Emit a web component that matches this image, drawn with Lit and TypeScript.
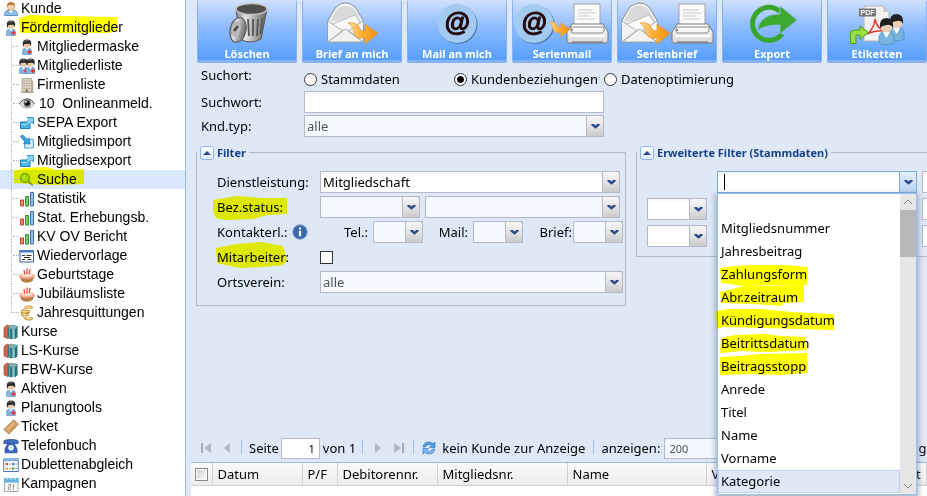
import { LitElement, html, svg, css, nothing, TemplateResult } from "lit";
import { customElement, property } from "lit/decorators.js";
import { classMap } from "lit/directives/class-map.js";

const nurse = (dx: number) => svg`<g transform="translate(${dx} 0)">
  <path d="M3.5 15.5V12q0-2.5 2.5-2.8h4q2.5.3 2.500 2.800v3.500z" fill="#7fb6e6" stroke="#5b8fbd" stroke-width=".6"/>
  <path d="M6.500 9l1.500 2.500L9.500 9z" fill="#fff"/>
  <circle cx="8" cy="5.500" r="3.300" fill="#e9c9a8"/>
  <path d="M3.800 5.500Q3.300.5 8 .5t4.200 4.500l-.3 2Q11 4.300 8.500 4.800 6 5.200 5.300 5 5 7.500 4.500 8z" fill="#2c2c2e"/>
  <path d="M5.500 2.200Q7 1.200 9.500 1.900" stroke="#888" stroke-width=".8" fill="none"/>
  <path d="M8.200 12.200h1.500v-1.500h1.400v1.500h1.400v1.500h-1.400v1.400H9.700v-1.400H8.200z" fill="#f02a2a"/></g>`;

const exportBox = svg`<path d="M1.500 7h9.500v6.500H1.500z" fill="#4fb4e6" stroke="#1b7fc0"/>
  <path d="M2.500 9.500h7" stroke="#a5def7"/>
  <path d="M8 2.500h6.500V9l-2-2-3 3L7 7.500l3-3z" fill="#8ad4f5" stroke="#1b86c6" stroke-width=".8"/>`;

const icons: Record<string, TemplateResult> = {
  user: svg`<path d="M1.500 14.500q0-5 4-5.500h5q4 .5 4 5.500z" fill="#8fc0ee" stroke="#4d7fb5" stroke-width=".8"/>
    <path d="M6 9l2 3.500L10 9z" fill="#fff"/><circle cx="8" cy="5.500" r="3.700" fill="#f6d3a5" stroke="#b98650" stroke-width=".6"/>
    <path d="M4 5.500Q3.800 1 8 1t4 4.500Q10.500 3.500 8 3.700T4 5.500z" fill="#bd7c3a"/>`,
  nurse: nurse(0),
  nurses: svg`${nurse(-3.5)}${nurse(3.5)}`,
  building: svg`<path d="M3 1.500h9.500V15H3z" fill="#ddd3c3" stroke="#a89a86" stroke-width=".8"/>
    <path d="M12.500 3l1.800 1v11h-1.800z" fill="#b8a994"/>
    <path d="M4.500 4h7M4.500 6.500h7M4.500 9h7M4.500 11.500h7" stroke="#a3967f" stroke-width="1.200" stroke-dasharray="1.400 1.200"/>
    <path d="M6.500 12.500h2.500V15H6.500z" fill="#80725f"/><path d="M1.500 15.300h13.500" stroke="#958a7a" stroke-width=".8"/>`,
  eye: svg`<path d="M.5 8Q4 2.500 8.500 2.800 13 3.200 15.500 8 12 12.500 8 12.300 3.500 12 .5 8z" fill="#e6e6e6" stroke="#999" stroke-width=".8"/>
    <path d="M.5 7.500Q4 2.500 8.500 2.800 13 3.200 15.500 8" stroke="#555" fill="none"/>
    <circle cx="8.300" cy="7.300" r="3.700" fill="#6d6d6d"/><circle cx="8.300" cy="7.300" r="2.400" fill="#111"/><circle cx="7" cy="6" r=".9" fill="#fff"/>`,
  export: exportBox,
  import: svg`<path d="M5.500 8.500V14h8.800V5.500H11" fill="#d9effb" stroke="#4aa5d8"/>
    <path d="M1.500 2.500l2-1.500 5 4.500 1.500-1.700 1 6.200-6.500-.5L6 8z" fill="#37a4e0" stroke="#1a74b3" stroke-width=".8"/>`,
  search: svg`<circle cx="6" cy="6" r="4.300" fill="#a5dc50" stroke="#5a9a1c" stroke-width="1.200"/>
    <path d="M3.800 5.500Q4.300 3.700 6.200 3.600" stroke="#eaffc5" fill="none"/><path d="M9.500 9.500l3.800 3.500" stroke="#8d9870" stroke-width="2" stroke-linecap="round"/>`,
  bars: svg`<path d="M1.500 9h3v6h-3z" fill="#ee8a72" stroke="#c33f28"/><path d="M6.500 5.500h3V15h-3z" fill="#77cf70" stroke="#2f9133"/>
    <path d="M11.500 1.500h3V15h-3z" fill="#94bdea" stroke="#3f70b6"/>`,
  form: svg`<path d="M1 2.500h13.500v11.500H1z" fill="#fff" stroke="#3b5f9e"/><path d="M.5 2h14.500v2.500H.5z" fill="#4a79c8"/>
    <path d="M3 7.500h3M7.500 7.500h5M5 9.500h6M3 11.500h3M8.500 11.500h4" stroke="#333"/>`,
  cake: svg`<path d="M1 8.500Q1 7 8 7t7 1.500v2Q15 12 8 12T1 10.500z" fill="#f7ab8e" stroke="#cc6d4c" stroke-width=".7"/>
    <ellipse cx="8" cy="8.300" rx="6.300" ry="1.600" fill="#fbe0ce"/>
    <path d="M2.500 11.500v2q1.500 1.700 5.500 1.700t5.500-1.700v-2Q12 12.700 8 12.700t-5.500-1.200z" fill="#bb813b" stroke="#8e5b21" stroke-width=".6"/>
    <path d="M5 3l.7 4.500M8 1.500V7M11 2l-.7 5" stroke="#e64a30" stroke-width="1.300"/>`,
  euro: svg`<path d="M13.500 3.300Q12 1.800 9.800 1.800 5 2 5 8t4.800 6.200q2.200 0 3.700-1.500M2 6.500h9M2 9.500h8" fill="none" stroke="#b98a3b" stroke-width="2.800"/>
    <path d="M13.200 3.300Q12 2 9.800 2 5 2.200 5 8t4.800 6q2.200 0 3.400-1.300M2.500 6.500h8M2.500 9.500h7" fill="none" stroke="#f4d388" stroke-width="1.500"/>`,
  books: svg`<path d="M1 3.500l3-2.500 3 1-2 2v10.500L1 13z" fill="#d0664b" stroke="#953b26" stroke-width=".6"/>
    <path d="M5 4l3-3 6.500 1.300L12 5z" fill="#7db5b8" stroke="#42757a" stroke-width=".5"/><path d="M5 4l4 1v10.500l-4-1.300z" fill="#2f7683"/>
    <path d="M9 5h3v10H9z" fill="#69b0b2"/><path d="M12 5l2.500-2.700v11L12 15.300z" fill="#2c6f79"/><path d="M6.500 5v9M10.500 5.500V15" stroke="#a3d5d5" stroke-width=".6"/>`,
  ticket: svg`<path d="M.7 10.500L10.500 1l2 1.200q-.2 1.500 1.300 1.600l1.700 1.400L6 15l-1.700-1.300q.2-1.600-1.500-1.700z" fill="#d9a769" stroke="#9d6e37" stroke-width=".8"/>
    <path d="M4.500 10.500L11 4.300" stroke="#f2d3a6"/><path d="M6.500 12.300L13 6" stroke="#b98446" stroke-width=".7"/>`,
  phone: svg`<path d="M.8 5.500V3.300Q1 1.500 8 1.500t7.200 1.800v2.200h-4V4.200H4.800v1.300z" fill="#3d72cf" stroke="#1c438f" stroke-width=".7"/>
    <path d="M5 5h6l3 6v3.800H2V11z" fill="#3166c4" stroke="#1c438f" stroke-width=".7"/><circle cx="8" cy="9.800" r="2.800" fill="#f1f6ff"/><circle cx="8" cy="9.800" r="1" fill="#c1d3f0"/>`,
  list: svg`<path d="M.7 2h14.600v12.500H.7z" fill="#fff" stroke="#4a77b8"/><path d="M.5 1.500h15v2.800H.5z" fill="#82aee5"/>
    <path d="M2.500 6h2.500v2.200H2.500z" fill="#e44a3b"/><path d="M2.500 10.500h2.500v2.200H2.500z" fill="#e8a935"/><path d="M9 6h2.500v2.200H9z" fill="#3f78d0"/><path d="M9 10.500h2.500v2.200H9z" fill="#4aa84a"/>
    <path d="M6 7h2M6 11.500h2M12.300 7h1.700M12.300 11.500h1.700" stroke="#999"/>`,
  calendar: svg`<path d="M1.500 2.500h13.500v13H1.500z" fill="#fafafa" stroke="#aaa"/><path d="M1 2h14.500v4.500H1z" fill="#5fb3de"/>
    <path d="M4.500.5v3M8.200.5v3M12 .5v3" stroke="#dceef8" stroke-width="1.500"/>
    <path d="M5 8.700h2.500v2.300H5.300v2.300h2.500M10.500 8.200v5.300" fill="none" stroke="#888" stroke-width=".9"/>`,
  info: svg`<circle cx="8" cy="8" r="7.300" fill="#3c68a8" stroke="#8fa8cd"/><path d="M8 3.500v2M8 6.800v5.400" stroke="#fff" stroke-width="2.200"/>`,
  refresh: svg`<path d="M2 7Q3 2 8 2q2.500 0 4 1.800L14 2v5.500H8.500l2-2Q9.500 4.500 8 4.500 5 4.700 4.500 7z" fill="#4d9be0" stroke="#2a6cb5" stroke-width=".6"/>
    <path d="M14 9Q13 14 8 14q-2.500 0-4-1.800L2 14V8.500h5.500l-2 2Q6.500 11.500 8 11.500q3-.2 3.500-2.500z" fill="#7db9ee" stroke="#2a6cb5" stroke-width=".6"/>`,
  first: svg`<path d="M4 3v10" stroke="#a3a9b3" stroke-width="2"/><path d="M13 3v10L6 8z" fill="#b4b9c1"/>`,
  prev: svg`<path d="M11 3v10L5 8z" fill="#b4b9c1"/>`,
  next: svg`<path d="M5 3v10l6-5z" fill="#b4b9c1"/>`,
  last: svg`<path d="M12 3v10" stroke="#a3a9b3" stroke-width="2"/><path d="M3 3v10l7-5z" fill="#b4b9c1"/>`,
  blank: svg`<circle cx="5" cy="5.500" r="4" fill="#8fc4ea" stroke="#3f86bd"/>`,
};
const icon = (name: string) => html`<svg class="icon" viewBox="0 0 16 16" aria-hidden="true">${icons[name]}</svg>`;

const gradients = svg`<defs>
  <linearGradient id="steel"><stop offset="0" stop-color="#777"/><stop offset=".3" stop-color="#e6e6e6"/><stop offset=".6" stop-color="#aaa"/><stop offset="1" stop-color="#666"/></linearGradient>
  <linearGradient id="orange"><stop offset="0" stop-color="#fde0a8"/><stop offset=".4" stop-color="#ffb23c"/><stop offset="1" stop-color="#f58f0c"/></linearGradient>
  <linearGradient id="paper" x2="0" y2="1"><stop offset="0" stop-color="#fff"/><stop offset="1" stop-color="#d5d7d6"/></linearGradient>
</defs>`;
const envelope = (x: number) => svg`<g transform="translate(${x} 0)">
  <path d="M1 20L9 7Q19-1 28 7l8 13v22H1z" fill="url(#paper)" stroke="#858c90"/>
  <path d="M3 21L10 8.500q9-6 17 0L34 21z" fill="#d8dada"/>
  <path d="M6 24l22-9 5 7-10 11H9z" fill="#fafafa" stroke="#aaa" stroke-width=".7"/>
  <path d="M1 21l15 10L1 42M36 21L21 31l15 11M1 42l15-12q3-1 5 0l15 12z" fill="#f1f2f1" stroke="#a1a5a6" stroke-width=".8"/></g>`;
const arrow = (x: number, s: number) => svg`<path transform="translate(${x} 20) scale(${s})" d="M0 3Q9 1 12 9q2 3 5 1.500V4l13 9.500L17 24v-6Q6 20 5 9 4 5 0 3z" fill="url(#orange)" stroke="#df9328" stroke-width=".7"/>`;
const atDisc = (x: number) => svg`<circle cx="${x + 1}" cy="24.500" r="19.500" fill="#4b79a8"/><circle cx="${x}" cy="23.500" r="19.500" fill="#a3cbf1"/>
  <text class="at" x="${x}" y="31" text-anchor="middle">@</text>`;
const printer = svg`<path d="M62 4h26v24H62z" fill="#fafafa" stroke="#a3a3a3"/><path d="M66 10h15M66 13h18M66 16h12M66 19h17" stroke="#c9c9c9"/>
  <path d="M60 24h31l5 8v9q0 2-2 2H57q-2 0-2-2v-9z" fill="url(#paper)" stroke="#75797c"/><path d="M59 27h33v4q-1 2-3 2H61q-2 0-2-2z" fill="#f8f8f8" stroke="#8c8c8c"/>
  <path d="M58 36h35" stroke="#fff" stroke-width="2"/><path d="M60 42h31" stroke="#666"/><circle cx="60" cy="30" r="1" fill="#777"/>`;
const person = (x: number, y: number) => svg`<g transform="translate(${x} ${y})"><path d="M1 27v-6q1-5 5-5h5q4 0 5 5v6q-7 4-15 0z" fill="#78b4de" stroke="#4b86b3" stroke-width=".7"/>
  <path d="M5 16l3.500 6L12 16z" fill="#fff"/><circle cx="8.500" cy="10.500" r="6" fill="#ecd0b5"/><path d="M2 12Q1 2 8.500 2T15 12q-2-4-6-3-5 .5-7 3z" fill="#1d1f22"/></g>`;

const bigIcons: Record<string, TemplateResult> = {
  trash: svg`<path d="M39 9l4 30q10 6 21 0l6-30z" fill="url(#steel)" stroke="#555"/><ellipse cx="54.500" cy="9" rx="15.500" ry="5.500" fill="#4e4e4e" stroke="#c9c9c9" stroke-width="1.500"/>
    <path d="M51 19l1 17M56 19v17M61 19l-1 17M65.500 18l-2 16" stroke="#555" stroke-width="1.800"/>
    <ellipse cx="41" cy="30" rx="8" ry="12.500" transform="rotate(12 41 30)" fill="url(#steel)" stroke="#555"/><ellipse cx="39" cy="29" rx="4.500" ry="8" transform="rotate(12 39 29)" fill="#b9b9b9"/>
    <path d="M37 31l4-5" stroke="#444" stroke-width="2.500"/>`,
  letter: svg`${envelope(25)}${arrow(46, 1)}`,
  at: atDisc(50),
  mailing: svg`${atDisc(22)}${printer}${arrow(37, 0.7)}`,
  letters: svg`${printer}${envelope(4)}${arrow(23, 1)}`,
  export: svg`<path d="M58 11.500A16.500 16.500 0 1 0 60 34" fill="none" stroke="#37a62a" stroke-width="5"/>
    <path d="M35 31Q38 14 58 14V6l17 14-17 14v-9q-14-1-23 6z" fill="#3daa2f" stroke="#7fb8e8" stroke-width=".8"/>`,
  labels: svg`<path d="M37 6h19l6 6v29H37z" fill="#f1f1f1" stroke="#b5b5b5"/><path d="M56 6v6h6z" fill="#ccc"/>
    <path d="M40 34q7-5 8-15 2 11 12 12-11-1-20 3z" fill="none" stroke="#df3b30" stroke-width="1.500"/>
    <path d="M32 8.500h17v8H32z" fill="#777"/><text class="pdf" x="40.500" y="15" text-anchor="middle">PDF</text>
    ${person(61, 12)}${person(51, 16)}
    <path d="M23.500 43.500V34q0-4 4-4H33v-4l8.500 6.500L33 39v-4h-4v8.500z" fill="#9bdf3e" stroke="#4c9d12"/>`,
};

const chevron = html`<svg viewBox="0 0 10 6" class="chevron" aria-hidden="true"><path d="M0 0h3l2 1.700L7 0h3v1.500L5 5.800 0 1.500z" fill="#2b4c8a"/></svg>`;

interface Marker { w: number; points: string }
const markers: Record<string, Marker> = {
  foerder: { w: 190, points: "19,0 30,-3 60,-2 117,-1 118,13 108,15 60,15 20,15" },
  suche: { w: 190, points: "14,1 24,-2 46,-3 56,0 84,-1 84,14 50,15 30,14 14,13" },
  bez: { w: 90, points: "-4,4 20,0 44,2 70,2 70,18 50,19 36,23 8,24 -1,22 -4,16" },
  mitarbeiter: { w: 90, points: "-1,2 20,-2 44,-4 66,0 70,14 66,19 46,21 22,22 0,17" },
  zahlung: { w: 120, points: "-1,5 14,3 32,2 64,2 87,4 86,22 50,22 24,23 0,20" },
  abr: { w: 120, points: "-1,6 12,3 22,0 83,-1 83,16 62,17 61,20 46,19 30,18 0,17" },
  kuend: { w: 120, points: "-5,2 8,0 40,0 70,3 113,5 113,21 80,20 40,19 2,18 -4,20" },
  beitritt: { w: 120, points: "0,6 14,3 44,2 60,4 84,5 86,18 46,20 20,19 -1,21" },
  stopp: { w: 120, points: "-1,2 20,1 38,-1 86,-2 86,18 60,20 30,19 -1,20" },
};
const mark = (key?: string) =>
  key ? html`<svg class="mark" width=${markers[key].w} height="24" aria-hidden="true"><polygon points=${markers[key].points} fill="#ff0"/></svg>` : nothing;

interface Node { t: string; i: string; sub?: boolean; last?: boolean; on?: boolean; m?: string }
const tree: Node[] = [
  { t: "Kunde", i: "user" },
  { t: "Fördermitglieder", i: "nurse", m: "foerder" },
  { t: "Mitgliedermaske", i: "nurse", sub: true },
  { t: "Mitgliederliste", i: "nurses", sub: true },
  { t: "Firmenliste", i: "building", sub: true },
  { t: "10  Onlineanmeld.", i: "eye", sub: true },
  { t: "SEPA Export", i: "export", sub: true },
  { t: "Mitgliedsimport", i: "import", sub: true },
  { t: "Mitgliedsexport", i: "export", sub: true },
  { t: "Suche", i: "search", sub: true, on: true, m: "suche" },
  { t: "Statistik", i: "bars", sub: true },
  { t: "Stat. Erhebungsb.", i: "bars", sub: true },
  { t: "KV OV Bericht", i: "bars", sub: true },
  { t: "Wiedervorlage", i: "form", sub: true },
  { t: "Geburtstage", i: "cake", sub: true },
  { t: "Jubiläumsliste", i: "cake", sub: true },
  { t: "Jahresquittungen", i: "euro", sub: true, last: true },
  { t: "Kurse", i: "books" },
  { t: "LS-Kurse", i: "books" },
  { t: "FBW-Kurse", i: "books" },
  { t: "Aktiven", i: "nurse" },
  { t: "Planungtools", i: "nurse" },
  { t: "Ticket", i: "ticket" },
  { t: "Telefonbuch", i: "phone" },
  { t: "Dublettenabgleich", i: "list" },
  { t: "Kampagnen", i: "calendar" },
  { t: "", i: "blank" },
];

const base = css`
  * { box-sizing: border-box; }
  .icon { width: 16px; height: 16px; flex: none; display: block; }
  .mark { position: absolute; left: 0; top: 0; overflow: visible; mix-blend-mode: multiply; pointer-events: none; }
`;

@customElement("nav-tree")
export class NavTree extends LitElement {
  static styles = [base, css`
    :host { display: block; font: 14px/19px "Liberation Sans", Arial, sans-serif; color: #000; }
    ul { list-style: none; margin: -1px 0 0; padding: 0; }
    li { position: relative; height: 19px; }
    a { display: flex; align-items: center; gap: 2px; height: 19px; padding-left: 3px; color: inherit; text-decoration: none; white-space: pre; }
    .sub a { padding-left: 19px; }
    .count { padding-left: 2px; }
    .sub::before { content: ""; position: absolute; left: 11px; top: 0; bottom: 0; border-left: 1px dotted #b4b4b4; }
    .sub::after { content: ""; position: absolute; left: 13px; top: 9px; width: 6px; border-top: 1px dotted #b4b4b4; }
    .last::before { bottom: 9px; }
    .on { background: #d9e8fb; }
  `];
  render() {
    return html`<ul>${tree.map((n) => html`<li class=${classMap({ sub: !!n.sub, last: !!n.last, on: !!n.on })}>
      <a href="#">${icon(n.i)}<span class=${n.i === "eye" ? "count" : ""}>${n.t}</span></a>${mark(n.m)}</li>`)}</ul>`;
  }
}

@customElement("combo-box")
export class ComboBox extends LitElement {
  @property() label = "";
  @property() value = "";
  @property({ type: Boolean }) muted = false;
  static styles = [base, css`
    :host { display: block; position: relative; height: 22px; }
    select { appearance: none; display: block; width: 100%; height: 22px; margin: 0; padding: 0 20px 0 2px; border: 1px solid #b5b8c8; border-radius: 0;
      background: linear-gradient(#f2f2f2, #fff 4px); color: #000; font: 13px "Noto Sans", Tahoma, sans-serif; }
    .muted { background: #f5f9ff; color: #555; }
    .trigger { position: absolute; right: 0; top: 0; width: 18px; height: 22px; display: grid; place-items: center; pointer-events: none;
      background: linear-gradient(#f7f7f7, #e4e4e4 50%, #cbcbcb); border: 1px solid #b5b8c8; border-top-right-radius: 3px; }
    .chevron { width: 9px; height: 5px; }
  `];
  render() {
    return html`<select class=${classMap({ muted: this.muted })} aria-label=${this.label}><option>${this.value}</option></select>
      <span class="trigger">${chevron}</span>`;
  }
}

const options: { t: string; m?: string; on?: boolean }[] = [
  { t: "" }, { t: "Mitgliedsnummer" }, { t: "Jahresbeitrag" }, { t: "Zahlungsform", m: "zahlung" }, { t: "Abr.zeitraum", m: "abr" },
  { t: "Kündigungsdatum", m: "kuend" }, { t: "Beitrittsdatum", m: "beitritt" }, { t: "Beitragsstopp", m: "stopp" },
  { t: "Anrede" }, { t: "Titel" }, { t: "Name" }, { t: "Vorname" }, { t: "Kategorie", on: true },
];

@customElement("field-picker")
export class FieldPicker extends LitElement {
  static styles = [base, css`
    :host { display: block; position: relative; height: 22px; font: 13px/23px "Noto Sans", Tahoma, sans-serif; }
    input { display: block; width: 100%; height: 22px; border: 1px solid #7eadd9; background: linear-gradient(#f0f0f0, #fff 4px); outline: none; caret-color: transparent; font: inherit; }
    .caret { position: absolute; left: 7px; top: 3px; width: 1px; height: 16px; background: #000; }
    .trigger { position: absolute; right: 0; top: 0; width: 18px; height: 22px; padding: 0; display: grid; place-items: center;
      background: linear-gradient(#e4effb, #b9d2f0); border: 1px solid #7eadd9; }
    .chevron { width: 9px; height: 5px; }
    .popup { position: absolute; z-index: 5; left: 0; top: 22px; width: 100%; display: flex; background: #fff; border: 1px solid #98c0f4; box-shadow: 0 3px 5px 2px rgb(90 105 130 / 45%); }
    ul { list-style: none; flex: 1; margin: 0; padding: 0 0 1px; }
    li { position: relative; height: 23px; padding-left: 3px; color: #000; white-space: nowrap; }
    .mark { left: 3px; }
    .on { background: #dfe8f6; outline: 1px dotted #a3bae9; outline-offset: -1px; }
    .bar { width: 16px; background: #e6e6e6; display: flex; flex-direction: column; align-items: center; }
    .bar svg { width: 16px; height: 16px; flex: none; }
    .thumb { width: 16px; height: 47px; background: #b8b8b8; }
    .track { flex: 1; }
  `];
  render() {
    return html`<input type="text" role="combobox" aria-label="Filterfeld" aria-expanded="true" aria-controls="fields"><span class="caret"></span>
      <button class="trigger" aria-label="Liste öffnen">${chevron}</button>
      <div class="popup"><ul id="fields" role="listbox">${options.map((o) => html`<li role="option" aria-selected=${o.on ? "true" : "false"} class=${o.on ? "on" : ""}>${o.t}${mark(o.m)}</li>`)}</ul>
        <div class="bar" aria-hidden="true"><svg viewBox="0 0 16 16"><path d="M4 10l4-4 4 4" fill="none" stroke="#888"/></svg><div class="thumb"></div><div class="track"></div>
        <svg viewBox="0 0 16 16"><path d="M4 6l4 4 4-4" fill="none" stroke="#888"/></svg></div></div>`;
  }
}

const actions = [
  ["Löschen", "trash"], ["Brief an mich", "letter"], ["Mail an mich", "at"], ["Serienmail", "mailing"],
  ["Serienbrief", "letters"], ["Export", "export"], ["Etiketten", "labels"],
];

@customElement("app-root")
export class AppRoot extends LitElement {
  static styles = [base, css`
    :host { display: flex; height: 100vh; overflow: hidden; background: #dfe8f6; color: #000; font: 13px/22px "Noto Sans", Tahoma, sans-serif; }
    nav { flex: none; width: 186px; background: #fff; border-right: 1px solid #99bbe8; overflow: hidden; }
    main { flex: 1; min-width: 0; display: flex; flex-direction: column; overflow: hidden; }
    .top { flex: 1; min-height: 0; padding-left: 10px; }
    .actions { display: flex; gap: 5px; padding-left: 1px; }
    .actions button { flex: none; width: 100px; height: 63px; padding: 0; border: 1px solid #86b1f0; border-top: 0; border-bottom-width: 3px; border-radius: 2px;
      background: linear-gradient(#d0e0fc, #8dbbff 45%, #559ffd); color: #fff; font: bold 11px/14px "Noto Sans", Tahoma, sans-serif; display: flex; flex-direction: column; align-items: center; }
    .actions svg { width: 100px; height: 47px; flex: none; }
    .at { font: bold italic 26px "Liberation Sans", Arial, sans-serif; fill: #23060c; stroke: #23060c; stroke-width: 1px; }
    .pdf { font: bold 7px "Liberation Sans", Arial, sans-serif; fill: #fff; }
    .search { display: grid; grid-template-columns: 103px 300px; row-gap: 2px; padding: 1px 0 0 5px; }
    .radios { display: grid; grid-template-columns: 150px 150px 150px; height: 25px; align-items: end; line-height: 20px; }
    .radios label { display: flex; align-items: center; gap: 4px; white-space: nowrap; }
    .radios input { appearance: none; width: 13px; height: 13px; margin: 0; border: 1px solid #333; border-radius: 50%; background: #fff; }
    .radios input:checked { background: radial-gradient(#000 0 3px, #fff 4px); }
    .text { width: 100%; height: 22px; border: 1px solid #b5b8c8; background: linear-gradient(#f2f2f2, #fff 4px); font: inherit; padding: 0 2px; }
    .panels { display: flex; gap: 10px; align-items: flex-start; margin-top: 7px; }
    fieldset { margin: 0; padding: 0; border: 1px solid #b5b8c8; min-width: 0; }
    .filter { flex: none; width: 430px; padding: 10px 2px 12px 20px; }
    .extended { flex: none; width: 400px; padding: 10px 5px 9px 10px; border-right: 0; }
    legend { display: flex; align-items: center; gap: 3px; height: 17px; padding: 0 3px; color: #15428b; font: bold 11px/17px "Noto Sans", Tahoma, sans-serif; }
    .filter legend { margin-left: -20px; }
    .extended legend { margin-left: -10px; }
    legend button { width: 14px; height: 14px; padding: 0; border: 1px solid #8fb8ea; border-radius: 3px; background: linear-gradient(#fff, #dcebfd); display: grid; place-items: center; }
    legend svg { width: 8px; height: 5px; }
    .rows { display: grid; row-gap: 3px; }
    .row { position: relative; display: grid; grid-template-columns: 103px 1fr; height: 22px; }
    .row > label, .caption { white-space: nowrap; display: flex; align-items: center; gap: 4px; }
    .short { width: 300px; }
    .pair { display: grid; grid-template-columns: 100px 195px; gap: 5px; }
    .contact { display: grid; grid-template-columns: 53px repeat(5, 50px); }
    .contact span { text-align: right; white-space: nowrap; padding-right: 5px; }
    .contact .tight { padding-right: 1px; }
    .tick { appearance: none; width: 13px; height: 13px; margin: 5px 0 0; border: 1px solid #333; background: #fff; }
    .grid { display: grid; grid-template-columns: 60px 200px 1fr; column-gap: 10px; row-gap: 5px; }
    .grid .second { margin-left: -5px; }
    .paging { display: flex; align-items: center; height: 28px; padding-left: 12px; white-space: nowrap; }
    .paging button { width: 16px; height: 16px; padding: 0; border: 0; background: none; margin-right: 5px; }
    .paging .end { margin-right: 6px; }
    .paging input { height: 21px; border: 1px solid #b5b8c8; font: 11px "Noto Sans", Tahoma, sans-serif; background: #fff; }
    .page { width: 39px; text-align: right; padding: 0 4px; margin: 0 3px 0 2px; }
    .size { width: 240px; margin: 0 14px 0 4px; padding: 0 4px; color: #555; }
    .paging .size { background: #f3f7fd; }
    .sep { width: 1px; height: 14px; background: #98c0f4; margin: 0 7px 3px 0; }
    .space { margin-left: 6px; }
    .status { margin-right: 2px; }
    .results { margin-left: 5px; height: 34px; background: #fff; border-top: 1px solid #99bbe8; overflow: hidden; flex: none; }
    table { table-layout: fixed; width: 100%; border-collapse: collapse; }
    th { height: 22px; padding: 0 5px; text-align: left; font-weight: normal; white-space: nowrap; background: linear-gradient(#fafafa, #ececee); border-right: 1px solid #d0d0d0; border-bottom: 1px solid #d0d0d0; overflow: hidden; }
    .c0 { width: 21px; } .c1 { width: 90px; } .c2 { width: 35px; } .c3 { width: 100px; } .c4 { width: 130px; } .c5 { width: 139px; } .c6 { width: 189px; }
    th input { appearance: none; display: block; width: 13px; height: 13px; margin: 0; border: 1px solid #888; background: linear-gradient(135deg, #ccc, #fff); outline: 1px solid #fff; outline-offset: -2px; }
    th.c0 { padding: 0 3px 0 4px; }
  `];

  private legend(text: string) {
    return html`<legend><button aria-label="${text} einklappen"><svg viewBox="0 0 8 5"><path d="M0 5l4-4 4 4z" fill="#2b4c8a"/></svg></button>${text}</legend>`;
  }

  render() {
    return html`
      <nav><nav-tree></nav-tree></nav>
      <main>
        <div class="top">
          <div class="actions">${actions.map(([t, i]) => html`<button><svg viewBox="0 0 100 47" aria-hidden="true">${gradients}${bigIcons[i]}</svg>${t}</button>`)}</div>
          <div class="search">
            <span>Suchort:</span>
            <div class="radios">
              <label><input type="radio" name="ort">Stammdaten</label>
              <label><input type="radio" name="ort" checked>Kundenbeziehungen</label>
              <label><input type="radio" name="ort">Datenoptimierung</label>
            </div>
            <label for="wort">Suchwort:</label><input id="wort" class="text" type="text">
            <label>Knd.typ:</label><combo-box label="Knd.typ" value="alle" muted></combo-box>
          </div>
          <div class="panels">
            <fieldset class="filter">${this.legend("Filter")}
              <div class="rows">
                <div class="row"><label>Dienstleistung:</label><combo-box class="short" label="Dienstleistung" value="Mitgliedschaft"></combo-box></div>
                <div class="row"><label>Bez.status:</label><div class="pair"><combo-box label="Bez.status" muted></combo-box><combo-box label="Bez.status Detail" muted></combo-box></div>${mark("bez")}</div>
                <div class="row"><span class="caption">Kontakterl.: ${icon("info")}</span>
                  <div class="contact">
                    <span>Tel.:</span><combo-box label="Tel." muted></combo-box>
                    <span>Mail:</span><combo-box label="Mail" muted></combo-box>
                    <span class="tight">Brief:</span><combo-box label="Brief" muted></combo-box>
                  </div></div>
                <div class="row"><label for="ma">Mitarbeiter:</label><input id="ma" class="tick" type="checkbox">${mark("mitarbeiter")}</div>
                <div class="row"><label>Ortsverein:</label><combo-box label="Ortsverein" value="alle" muted></combo-box></div>
              </div>
            </fieldset>
            <fieldset class="extended">${this.legend("Erweiterte Filter (Stammdaten)")}
              <div class="grid">
                <span></span><field-picker></field-picker><input class="text second" type="text" aria-label="Wert 1">
                <combo-box label="Verknüpfung 2"></combo-box><combo-box label="Feld 2"></combo-box><input class="text second" type="text" aria-label="Wert 2">
                <combo-box label="Verknüpfung 3"></combo-box><combo-box label="Feld 3"></combo-box><input class="text second" type="text" aria-label="Wert 3">
              </div>
            </fieldset>
          </div>
        </div>
        <div class="paging">
          <button aria-label="Erste Seite">${icon("first")}</button><button class="end" aria-label="Vorherige Seite">${icon("prev")}</button><span class="sep"></span>
          <label for="seite">Seite</label><input id="seite" class="page" type="text" value="1"><span>von 1</span>
          <span class="sep space"></span><button aria-label="Nächste Seite">${icon("next")}</button><button class="end" aria-label="Letzte Seite">${icon("last")}</button>
          <span class="sep"></span><button aria-label="Aktualisieren">${icon("refresh")}</button><span class="status">kein Kunde zur Anzeige</span><span class="sep space"></span>
          <label for="anz">anzeigen:</label><input id="anz" class="size" type="text" value="200"><span>g</span>
        </div>
        <div class="results">
          <table><thead><tr>
            <th class="c0"><input type="checkbox" aria-label="Alle auswählen"></th><th class="c1">Datum</th><th class="c2">P/F</th><th class="c3">Debitorennr.</th>
            <th class="c4">Mitgliedsnr.</th><th class="c5">Name</th><th class="c6">V</th><th>Ort</th>
          </tr></thead></table>
        </div>
      </main>`;
  }
}
